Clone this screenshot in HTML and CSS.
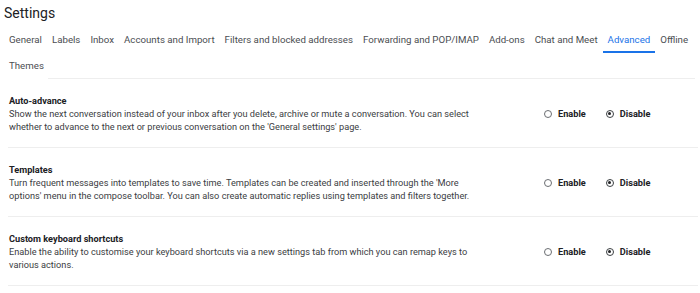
FILE: index.html
```html
<!DOCTYPE html>
<html lang="en">
<head>
    <meta charset="UTF-8">
    <title>Settings</title>
    <link rel="stylesheet" href="styles.css">
</head>
<body>
    <div class="page">
        <h1 class="page-title">Settings</h1>
        <div class="tabs">
            <a href="#" class="tab">General</a>
            <a href="#" class="tab">Labels</a>
            <a href="#" class="tab">Inbox</a>
            <a href="#" class="tab">Accounts and Import</a>
            <a href="#" class="tab">Filters and blocked addresses</a>
            <a href="#" class="tab">Forwarding and POP/IMAP</a>
            <a href="#" class="tab">Add-ons</a>
            <a href="#" class="tab">Chat and Meet</a>
            <a href="#" class="tab active">Advanced</a>
            <a href="#" class="tab">Offline</a>
            <a href="#" class="tab">Themes</a>
        </div>
        <div class="tab-rule"></div>

        <div class="setting">
            <div class="setting-label">
                <div class="setting-name">Auto-advance</div>
                <div class="setting-desc">Show the next conversation instead of your inbox after you delete, archive or mute a conversation. You can select whether to advance to the next or previous conversation on the 'General settings' page.</div>
            </div>
            <div class="options">
                <label class="option"><span class="radio"></span>Enable</label>
                <label class="option"><span class="radio checked"></span>Disable</label>
            </div>
        </div>

        <div class="setting">
            <div class="setting-label">
                <div class="setting-name">Templates</div>
                <div class="setting-desc">Turn frequent messages into templates to save time. Templates can be created and inserted through the 'More options' menu in the compose toolbar. You can also create automatic replies using templates and filters together.</div>
            </div>
            <div class="options">
                <label class="option"><span class="radio"></span>Enable</label>
                <label class="option"><span class="radio checked"></span>Disable</label>
            </div>
        </div>

        <div class="setting">
            <div class="setting-label">
                <div class="setting-name">Custom keyboard shortcuts</div>
                <div class="setting-desc">Enable the ability to customise your keyboard shortcuts via a new settings tab from which you can remap keys to various actions.</div>
            </div>
            <div class="options">
                <label class="option"><span class="radio"></span>Enable</label>
                <label class="option"><span class="radio checked"></span>Disable</label>
            </div>
        </div>
    </div>
</body>
</html>
```
FILE: styles.css
```css
body {
    margin: 0;
    padding: 0;
    background: #ffffff;
    font-family: Roboto, 'Liberation Sans', sans-serif;
    color: #202124;
}
.page {
    width: 700px;
}
.page-title {
    margin: 0;
    padding: 3px 0 0 4px;
    height: 24px;
    font-size: 14px;
    font-weight: 400;
    line-height: 20px;
    color: #202124;
}
.tabs {
    display: flex;
    flex-wrap: wrap;
    padding-left: 4px;
}
.tab {
    padding: 0 5px;
    height: 26px;
    line-height: 26px;
    font-size: 9.7px;
    color: #4a4d51;
    text-decoration: none;
    box-sizing: border-box;
}
.tab.active {
    color: #1a73e8;
    border-bottom: 2px solid #1a73e8;
}
.tab-rule {
    margin: -1px 5px 0 48px;
    border-top: 1px solid #eeeeee;
}
.setting {
    display: flex;
    align-items: flex-start;
    margin: 0 2px 0 8px;
    padding: 15px 0 14px;
    border-bottom: 1px solid #eeeeee;
}
.setting-label {
    flex: 0 0 472px;
    padding-left: 1px;
    line-height: 13px;
}
.setting-name {
    font-size: 9.2px;
    font-weight: 700;
    color: #202124;
}
.setting-desc {
    font-size: 9.2px;
    color: #3c4043;
}
.options {
    display: flex;
    gap: 20px;
    margin: 13px 0 0 63px;
}
.option {
    display: flex;
    align-items: center;
    gap: 6px;
    font-size: 9.2px;
    font-weight: 700;
    line-height: 13px;
    color: #202124;
}
.radio {
    width: 8px;
    height: 8px;
    border: 1px solid #6b6e72;
    border-radius: 50%;
    box-sizing: border-box;
    position: relative;
}
.radio.checked {
    border-color: #3c4043;
}
.radio.checked::after {
    content: '';
    position: absolute;
    left: 1.5px;
    top: 1.5px;
    width: 3px;
    height: 3px;
    border-radius: 50%;
    background: #202124;
}
```
